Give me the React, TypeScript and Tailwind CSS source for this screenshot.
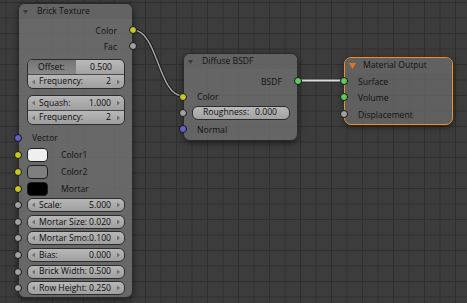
import React from "react";

const FONT = "font-['Open_Sans',sans-serif]";
const TXT = "text-[8.6px] leading-none whitespace-nowrap font-medium";

function Socket({ color, side }: { color: string; side: "l" | "r" }) {
  const pos = side === "l" ? "left-[-5px]" : "right-[-5px]";
  return (
    <span
      className={`absolute top-1/2 -translate-y-1/2 w-[8px] h-[8px] rounded-full border border-[#151515] ${color} ${pos}`}
    />
  );
}

function Tri({ orange }: { orange?: boolean }) {
  return orange ? (
    <svg width="7" height="6" viewBox="0 0 7 6" className="shrink-0">
      <polygon points="0,0 7,0 3.5,6" fill="#e3741f" />
    </svg>
  ) : (
    <svg width="5" height="4" viewBox="0 0 5 4" className="shrink-0">
      <polygon points="0,0 5,0 2.5,4" fill="#3a3a3a" />
    </svg>
  );
}

function Header({ title, orange }: { title: string; orange?: boolean }) {
  return (
    <div className="h-[15px] shrink-0 flex items-center rounded-t-[6px] bg-[rgba(98,98,98,0.75)] pl-[4px]">
      <Tri orange={orange} />
      <span className={`${orange ? "ml-[7px]" : "ml-[9px]"} ${TXT} text-[#111]`}>{title}</span>
    </div>
  );
}

function OutRow({ label, color, h = "h-[16px]" }: { label: string; color: string; h?: string }) {
  return (
    <div className={`relative ${h} shrink-0 flex items-center justify-end pr-[15px]`}>
      <span className={`relative top-[1px] ${TXT} text-[#111]`}>{label}</span>
      <Socket color={color} side="r" />
    </div>
  );
}

function InRow({ label, color, h = "h-[16px]" }: { label: string; color: string; h?: string }) {
  return (
    <div className={`relative ${h} shrink-0 flex items-center pl-[13px]`}>
      <span className={`relative top-[1px] ${TXT} text-[#111]`}>{label}</span>
      <Socket color={color} side="l" />
    </div>
  );
}

function ArrowL() {
  return (
    <svg width="3" height="5" viewBox="0 0 3 5" className="absolute left-[4px] top-1/2 -translate-y-1/2">
      <polygon points="3,0 3,5 0,2.5" fill="#707070" />
    </svg>
  );
}
function ArrowR() {
  return (
    <svg width="3" height="5" viewBox="0 0 3 5" className="absolute right-[4px] top-1/2 -translate-y-1/2">
      <polygon points="0,0 0,5 3,2.5" fill="#707070" />
    </svg>
  );
}

function NumInner({ label, value, h }: { label: string; value: string; h: string }) {
  return (
    <div
      className={`relative ${h} flex items-center justify-between pl-[11px] pr-[13px] bg-gradient-to-b from-[#b8b8b8] to-[#9f9f9f]`}
    >
      <ArrowL />
      <span className={`${TXT} text-[#0a0a0a]`}>{label}</span>
      <span className={`${TXT} text-[#0a0a0a]`}>{value}</span>
      <ArrowR />
    </div>
  );
}

function SliderInner({ label, value, h, fill }: { label: string; value: string; h: string; fill: number }) {
  return (
    <div className={`relative ${h} flex items-center bg-gradient-to-b from-[#bababa] to-[#a2a2a2]`}>
      <div
        className="absolute left-0 top-0 bottom-0 bg-gradient-to-b from-[#747474] to-[#8a8a8a]"
        style={{ width: `${fill * 100}%` }}
      />
      <div className="relative flex-1 flex items-center justify-between pl-[10px] pr-[12px]">
        <span className={`${TXT} text-[#0a0a0a]`}>{label}</span>
        <span className={`${TXT} text-[#0a0a0a]`}>{value}</span>
      </div>
    </div>
  );
}

function FieldRow({ label, value }: { label: string; value: string }) {
  return (
    <div className="relative h-[16.6px] shrink-0 flex items-center pl-[8px] pr-[7px]">
      <div className="flex-1 rounded-[6px] border border-[#2c2c2c] overflow-hidden">
        <NumInner label={label} value={value} h="h-[12px]" />
      </div>
      <Socket color="bg-[#a1a1a1]" side="l" />
    </div>
  );
}

function SwatchRow({ label, swatch }: { label: string; swatch: string }) {
  return (
    <div className="relative h-[17px] shrink-0 flex items-center pl-[8px]">
      <span className={`w-[21px] h-[14px] rounded-[4px] border border-[#1e1e1e] ${swatch}`} />
      <span className={`relative top-[1px] ml-[13px] ${TXT} text-[#111]`}>{label}</span>
      <Socket color="bg-[#c7c729]" side="l" />
    </div>
  );
}

export default function App() {
  return (
    <div
      className={`relative w-[467px] h-[303px] overflow-hidden bg-[#3c3c3c] bg-[image:linear-gradient(to_right,#2f2f2f_1px,transparent_1px),linear-gradient(to_bottom,#2f2f2f_1px,transparent_1px)] bg-[size:15.5px_15.5px] bg-[position:5.5px_2px] ${FONT}`}
    >
      {/* links */}
      <svg className="absolute inset-0" width="467" height="303" viewBox="0 0 467 303">
        <path d="M133 30 C158 30, 158 96, 183 96" stroke="#1c1c1c" strokeWidth="3.5" fill="none" />
        <path d="M133 30 C158 30, 158 96, 183 96" stroke="#a8a8a8" strokeWidth="1.4" fill="none" />
        <path d="M298 80.5 L344 80.5" stroke="#2a2a2a" strokeWidth="4" fill="none" />
        <path d="M298 80.5 L344 80.5" stroke="#dcdcdc" strokeWidth="1.8" fill="none" />
      </svg>

      {/* Brick Texture */}
      <div className="absolute left-[18px] top-[3px] w-[115px] h-[295px] rounded-[7px] border border-[#2b2b2b] bg-[rgba(120,120,120,0.74)] shadow-[0_2px_6px_rgba(0,0,0,0.5)] flex flex-col">
        <Header title="Brick Texture" />
        <div className="h-[3px] shrink-0" />
        <OutRow label="Color" color="bg-[#c7c729]" />
        <OutRow label="Fac" color="bg-[#a1a1a1]" />
        <div className="mt-[5px] ml-[8px] mr-[7px] shrink-0 rounded-[6px] border border-[#2c2c2c] overflow-hidden flex flex-col">
          <SliderInner label="Offset:" value="0.500" h="h-[14px]" fill={0.5} />
          <div className="h-px bg-[#4a4a4a]" />
          <NumInner label="Frequency:" value="2" h="h-[13px]" />
        </div>
        <div className="mt-[6px] ml-[8px] mr-[7px] shrink-0 rounded-[6px] border border-[#2c2c2c] overflow-hidden flex flex-col">
          <NumInner label="Squash:" value="1.000" h="h-[14px]" />
          <div className="h-px bg-[#4a4a4a]" />
          <NumInner label="Frequency:" value="2" h="h-[13px]" />
        </div>
        <div className="h-[4px] shrink-0" />
        <InRow label="Vector" color="bg-[#6363c7]" h="h-[17px]" />
        <SwatchRow label="Color1" swatch="bg-[#efefef]" />
        <SwatchRow label="Color2" swatch="bg-[#7f7f7f]" />
        <SwatchRow label="Mortar" swatch="bg-[#000000]" />
        <FieldRow label="Scale:" value="5.000" />
        <FieldRow label="Mortar Size:" value="0.020" />
        <FieldRow label="Mortar Smo:" value="0.100" />
        <FieldRow label="Bias:" value="0.000" />
        <FieldRow label="Brick Width:" value="0.500" />
        <FieldRow label="Row Height:" value="0.250" />
      </div>

      {/* Diffuse BSDF */}
      <div className="absolute left-[183px] top-[53px] w-[115px] h-[88px] rounded-[7px] border border-[#2b2b2b] bg-[rgba(116,116,116,0.74)] shadow-[0_2px_6px_rgba(0,0,0,0.5)] flex flex-col">
        <Header title="Diffuse BSDF" />
        <div className="h-[4px] shrink-0" />
        <OutRow label="BSDF" color="bg-[#63c763]" />
        <InRow label="Color" color="bg-[#c7c729]" h="h-[15px]" />
        <div className="relative h-[17px] shrink-0 flex items-center pl-[8px] pr-[7px]">
          <div className="flex-1 rounded-[6px] border border-[#2c2c2c] overflow-hidden">
            <SliderInner label="Roughness:" value="0.000" h="h-[12px]" fill={0} />
          </div>
          <Socket color="bg-[#a1a1a1]" side="l" />
        </div>
        <InRow label="Normal" color="bg-[#6363c7]" />
      </div>

      {/* Material Output */}
      <div className="absolute left-[344px] top-[57px] w-[109px] h-[68px] rounded-[7px] border border-[#e8902c] bg-[rgba(108,108,108,0.74)] shadow-[0_2px_6px_rgba(0,0,0,0.5)] flex flex-col">
        <Header title="Material Output" orange />
        <InRow label="Surface" color="bg-[#63c763]" />
        <InRow label="Volume" color="bg-[#63c763]" />
        <InRow label="Displacement" color="bg-[#a1a1a1]" h="h-[18px]" />
      </div>
    </div>
  );
}
